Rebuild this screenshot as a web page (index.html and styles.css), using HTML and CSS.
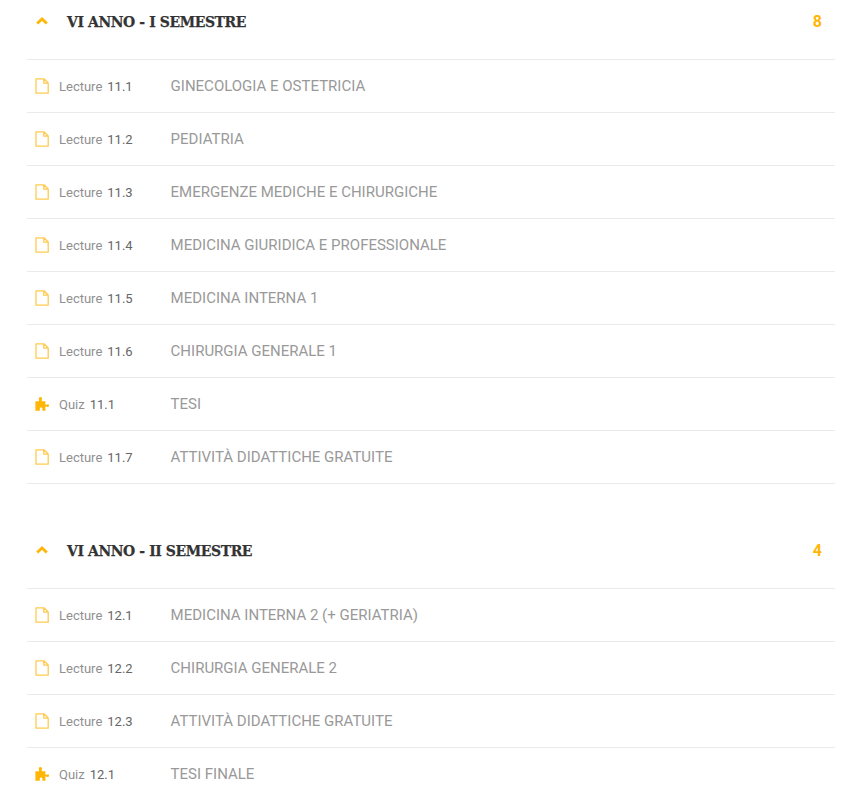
FILE: index.html
```html
<!DOCTYPE html>
<html lang="it">
<head>
<meta charset="utf-8">
<title>Curriculum</title>
<link rel="stylesheet" href="styles.css">
</head>
<body>
<svg class="defs" width="0" height="0" aria-hidden="true">
  <symbol id="file" viewBox="0 0 14 16"><path d="M1 .8h8L13.2 5v10.2H1zM8.8 .8v4.4h4.4" fill="none" stroke="currentColor" stroke-width="1.3" stroke-linejoin="round"/></symbol>
  <symbol id="puzzle" viewBox="0 0 15 15"><path d="M4 4.2V2.4a1.6 1.6 0 1 1 2.8 0v1.8h3.6v3.6h1.4a1.2 1.2 0 0 1 2.2 .8 1.2 1.2 0 0 1-2.2 .8h-1.4v4.4H7.4v-2a1.3 1.3 0 0 0-2.6 0v2H.4V4.2z" fill="currentColor"/></symbol>
  <symbol id="chevron" viewBox="0 0 12 8"><path d="M1.2 6.6L6 2l4.8 4.6" fill="none" stroke="currentColor" stroke-width="2.8"/></symbol>
</svg>
<main class="curriculum">
  <section class="section">
    <header class="section-head">
      <svg class="chevron"><use href="#chevron"/></svg>
      <h2 class="section-title">VI ANNO - I SEMESTRE</h2>
      <span class="section-count">8</span>
    </header>
    <ul class="items">
      <li class="item"><span class="meta"><svg class="icon-file"><use href="#file"/></svg><span class="kind">Lecture</span><span class="num">11.1</span></span><span class="name">GINECOLOGIA E OSTETRICIA</span></li>
      <li class="item"><span class="meta"><svg class="icon-file"><use href="#file"/></svg><span class="kind">Lecture</span><span class="num">11.2</span></span><span class="name">PEDIATRIA</span></li>
      <li class="item"><span class="meta"><svg class="icon-file"><use href="#file"/></svg><span class="kind">Lecture</span><span class="num">11.3</span></span><span class="name">EMERGENZE MEDICHE E CHIRURGICHE</span></li>
      <li class="item"><span class="meta"><svg class="icon-file"><use href="#file"/></svg><span class="kind">Lecture</span><span class="num">11.4</span></span><span class="name">MEDICINA GIURIDICA E PROFESSIONALE</span></li>
      <li class="item"><span class="meta"><svg class="icon-file"><use href="#file"/></svg><span class="kind">Lecture</span><span class="num">11.5</span></span><span class="name">MEDICINA INTERNA 1</span></li>
      <li class="item"><span class="meta"><svg class="icon-file"><use href="#file"/></svg><span class="kind">Lecture</span><span class="num">11.6</span></span><span class="name">CHIRURGIA GENERALE 1</span></li>
      <li class="item"><span class="meta"><svg class="icon-puzzle"><use href="#puzzle"/></svg><span class="kind">Quiz</span><span class="num">11.1</span></span><span class="name">TESI</span></li>
      <li class="item"><span class="meta"><svg class="icon-file"><use href="#file"/></svg><span class="kind">Lecture</span><span class="num">11.7</span></span><span class="name">ATTIVITÀ DIDATTICHE GRATUITE</span></li>
    </ul>
  </section>
  <section class="section">
    <header class="section-head">
      <svg class="chevron"><use href="#chevron"/></svg>
      <h2 class="section-title">VI ANNO - II SEMESTRE</h2>
      <span class="section-count">4</span>
    </header>
    <ul class="items">
      <li class="item"><span class="meta"><svg class="icon-file"><use href="#file"/></svg><span class="kind">Lecture</span><span class="num">12.1</span></span><span class="name">MEDICINA INTERNA 2 (+ GERIATRIA)</span></li>
      <li class="item"><span class="meta"><svg class="icon-file"><use href="#file"/></svg><span class="kind">Lecture</span><span class="num">12.2</span></span><span class="name">CHIRURGIA GENERALE 2</span></li>
      <li class="item"><span class="meta"><svg class="icon-file"><use href="#file"/></svg><span class="kind">Lecture</span><span class="num">12.3</span></span><span class="name">ATTIVITÀ DIDATTICHE GRATUITE</span></li>
      <li class="item"><span class="meta"><svg class="icon-puzzle"><use href="#puzzle"/></svg><span class="kind">Quiz</span><span class="num">12.1</span></span><span class="name">TESI FINALE</span></li>
    </ul>
  </section>
</main>
</body>
</html>
```
FILE: styles.css
```css
html, body {
  margin: 0;
  height: 799px;
  overflow: hidden;
  background: #fff;
}
body {
  font-family: Roboto, "Liberation Sans", sans-serif;
}
.defs {
  display: block;
  height: 0;
}
.curriculum {
  padding: 0 27px;
}
.section {
  padding-top: 11px;
}
.section + .section {
  margin-top: 45px;
}
.section-head {
  display: flex;
  align-items: center;
  height: 20px;
  padding: 0 13px 28px 9px;
}
.chevron {
  width: 12px;
  height: 8px;
  margin-right: 19px;
  color: #ffb606;
}
.section-title {
  flex: 1;
  margin: 0;
  padding-top: 1px;
  font-family: "DejaVu Serif Condensed", "DejaVu Serif", serif;
  font-size: 15.5px;
  font-weight: 700;
  letter-spacing: -0.4px;
  line-height: 20px;
  color: #333;
  -webkit-text-stroke: 0.25px #333;
}
.section-count {
  font-size: 16px;
  font-weight: 700;
  color: #ffb606;
}
.items {
  margin: 0;
  padding: 0;
  list-style: none;
  border-bottom: 1px solid #eaeaea;
}
.item {
  display: flex;
  align-items: center;
  height: 52px;
  padding-left: 8px;
  border-top: 1px solid #eaeaea;
}
.meta {
  display: flex;
  align-items: center;
  flex: none;
  width: 135.6px;
}
.icon-file {
  width: 14px;
  height: 16px;
  margin-right: 10px;
  color: #ffb606;
  opacity: .7;
}
.icon-puzzle {
  width: 15px;
  height: 15px;
  margin-right: 9px;
  color: #ffb606;
}
.kind {
  font-size: 13px;
  color: #909090;
  margin-right: 5px;
}
.num {
  font-size: 13px;
  color: #666;
}
.name {
  font-size: 15px;
  color: #999;
}
```
